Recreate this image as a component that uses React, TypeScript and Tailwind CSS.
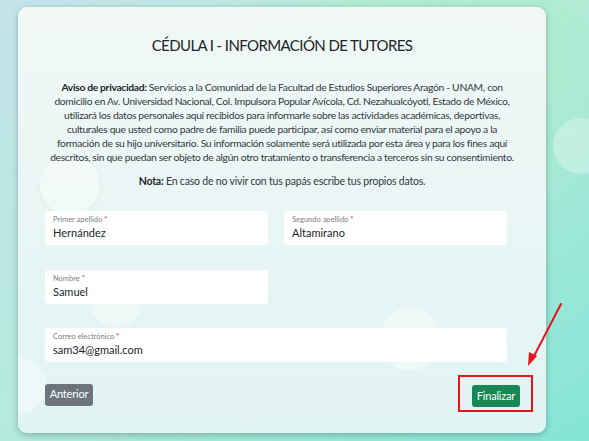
export default function App() {
  return (
    <div
      className="relative w-[589px] h-[441px] overflow-hidden bg-gradient-to-br from-[#c3e4ea] via-[#b4eadb] to-[#84e5d6]"
      style={{ fontFamily: 'Lato, "Noto Sans", sans-serif' }}
    >
      <div className="absolute -top-20 right-0 w-[300px] h-[260px] rounded-full bg-[#a8edc4]/70 blur-3xl" />
      <div className="absolute right-[-20px] top-[118px] w-[56px] h-[56px] rounded-full bg-white/30" />

      <div className="relative mx-[18px] mt-[7px] w-[528px] h-[426px] rounded-[9px] bg-gradient-to-b from-[#f1f8f6] to-[#e0f4f3] shadow-[0_2px_6px_rgba(0,0,0,0.25)] overflow-hidden">
        {/* decorative circles */}
        <div className="absolute left-[22px] top-[148px] w-[60px] h-[60px] rounded-full bg-white/40 shadow-[0_2px_6px_rgba(0,0,0,0.04)]" />
        <div className="absolute left-[72px] top-[268px] w-[52px] h-[52px] rounded-full bg-white/40" />
        <div className="absolute left-[364px] top-[300px] w-[56px] h-[64px] rounded-full bg-white/40" />
        <div className="absolute left-[-30px] top-[350px] w-[58px] h-[58px] rounded-full bg-white/40" />

        <div className="relative flex flex-col items-start pt-[26px] px-[27px]">
          <h1 className="self-center text-center text-[15px] leading-[24px] text-[#212529] tracking-[-0.6px]">
            CÉDULA I - INFORMACIÓN DE TUTORES
          </h1>

          <p className="self-center mt-[23px] text-center text-[10.3px] leading-[14px] text-[#33383d] tracking-[-0.32px] whitespace-nowrap">
            <b className="text-[#212529]">Aviso de privacidad:</b> Servicios a la Comunidad de la Facultad de Estudios Superiores Aragón - UNAM, con
            <br />
            domicilio en Av. Universidad Nacional, Col. Impulsora Popular Avícola, Cd. Nezahualcóyotl, Estado de México,
            <br />
            utilizará los datos personales aquí recibidos para informarle sobre las actividades académicas, deportivas,
            <br />
            culturales que usted como padre de familia puede participar, así como enviar material para el apoyo a la
            <br />
            formación de su hijo universitario. Su información solamente será utilizada por esta área y para los fines aquí
            <br />
            descritos, sin que puedan ser objeto de algún otro tratamiento o transferencia a terceros sin su consentimiento.
          </p>

          <p className="self-center mt-[10px] text-center text-[10.5px] leading-[14px] text-[#33383d] tracking-[-0.2px]">
            <b className="text-[#212529]">Nota:</b> En caso de no vivir con tus papás escribe tus propios datos.
          </p>

          <div className="mt-[23px] w-[462px] grid grid-cols-2 gap-x-[16px] gap-y-[25px]">
            <Field label="Primer apellido" value="Hernández" />
            <Field label="Segundo apellido" value="Altamirano" />
            <Field label="Nombre" value="Samuel" />
            <div />
            <div className="col-span-2 -mt-[1px]">
              <Field label="Correo electrónico" value="sam34@gmail.com" />
            </div>
          </div>

          <div className="mt-[20px] flex justify-between items-center w-[475px]">
            <button className="h-[22px] w-[48px] rounded-[3px] bg-[#6c757d] text-white text-[11px] tracking-[-0.2px]">
              Anterior
            </button>
            <div className="relative">
              <div className="absolute left-[-14px] top-[-7px] w-[75px] h-[37px] border-2 border-[#e8141c]" />
              <button className="relative h-[22px] w-[48px] rounded-[3px] bg-[#198754] text-white text-[11px] tracking-[-0.2px]">
                Finalizar
              </button>
            </div>
          </div>
        </div>
      </div>

      <svg className="absolute left-0 top-0" width="589" height="441" viewBox="0 0 589 441">
        <line x1="561" y1="304" x2="533" y2="358" stroke="#e8141c" strokeWidth="2" strokeLinecap="round" />
        <polygon points="528,366 529,352 537,356" fill="#e8141c" />
      </svg>
    </div>
  );
}

function Field({ label, value }: { label: string; value: string }) {
  return (
    <div className="h-[34px] rounded-[4px] bg-white px-[8px] pt-[4px] flex flex-col">
      <span className="text-[7.5px] leading-[10px] text-[#7a8087]">
        {label} <span className="text-[#dc3545]">*</span>
      </span>
      <span className="text-[11px] leading-[15px] text-[#212529]">{value}</span>
    </div>
  );
}
